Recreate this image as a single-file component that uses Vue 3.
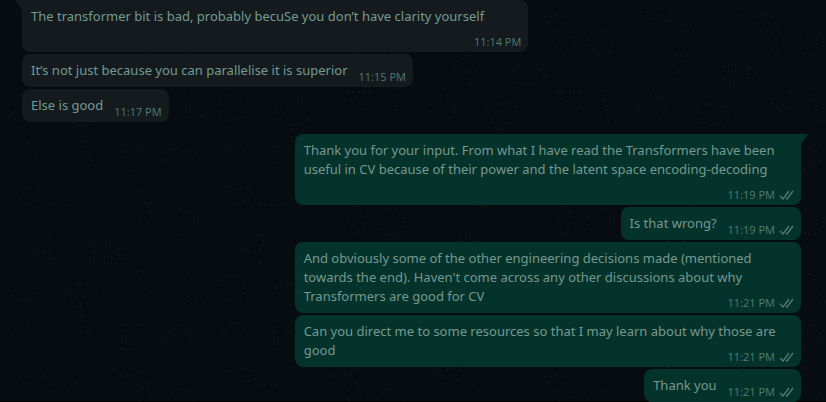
<script setup>
const messages = [
  { from: 'in', tail: true, time: '11:14 PM', text: 'The transformer bit is bad, probably becuSe you don’t have clarity yourself' },
  { from: 'in', time: '11:15 PM', text: 'It’s not just because you can parallelise it is superior' },
  { from: 'in', time: '11:17 PM', text: 'Else is good' },
  { from: 'out', tail: true, time: '11:19 PM', text: 'Thank you for your input. From what I have read the Transformers have been useful in CV because of their power and the latent space encoding-decoding' },
  { from: 'out', time: '11:19 PM', text: 'Is that wrong?' },
  { from: 'out', time: '11:21 PM', text: 'And obviously some of the other engineering decisions made (mentioned towards the end). Haven\'t come across any other discussions about why Transformers are good for CV' },
  { from: 'out', time: '11:21 PM', text: 'Can you direct me to some resources so that I may learn about why those are good' },
  { from: 'out', time: '11:21 PM', text: 'Thank you' },
]
</script>

<template>
  <main class="chat">
    <svg class="wallpaper" aria-hidden="true">
      <defs>
        <pattern id="doodles" width="210" height="180" patternUnits="userSpaceOnUse">
          <g fill="none" stroke="#1a2124" stroke-width="1" stroke-dasharray="1 3 1 6">
            <path d="M16 12l22-5 8 12-24 5zM50 24c8 2 18 3 28-2" />
            <path d="M112 8c12 18 28 4 38-2M146 22l9 24-12 10-6-24z" />
            <path d="M38 62c6-12 18-8 15 2s-15 12-22 2M50 68v18" />
            <circle cx="181" cy="42" r="13" />
            <path d="M94 65h24v18H94zM118 69c12 0 8 12 0 10" />
            <circle cx="22" cy="108" r="13" />
            <path d="M66 106l28-4 5 18-25 7zM82 125v18" />
            <path d="M138 92h25M141 99c2 13 17 17 22 3M184 95l5 30 15-10" />
            <path d="M12 154l14-14 12 16M64 147v25M76 154c10-9 22 4 12 14" />
            <path d="M122 145h22v25h-22zM158 155l25-10 10 15-20 10z" />
          </g>
        </pattern>
      </defs>
      <rect width="100%" height="100%" fill="url(#doodles)" />
    </svg>
    <article
      v-for="(message, index) in messages"
      :key="index"
      class="bubble"
      :class="[message.from, { tailed: message.tail }]"
    >
      <svg v-if="message.tail" class="tail" viewBox="0 0 8 12" aria-hidden="true">
        <path d="M0 0h7L0 10z" fill="currentColor" />
      </svg>
      <span class="text">{{ message.text }}</span>
      <span class="meta">
        <time>{{ message.time }}</time>
        <svg v-if="message.from === 'out'" class="ticks" viewBox="0 0 15 10" aria-label="Delivered">
          <path d="M1 6l3 3 6-8M7 8l1 1 6-8" fill="none" stroke="currentColor" stroke-width="1.3" />
        </svg>
      </span>
    </article>
  </main>
</template>

<style>
body {
  margin: 0;
  background: #070c10;
}
</style>

<style scoped>
.chat {
  position: relative;
  box-sizing: border-box;
  min-height: 100vh;
  display: flex;
  flex-direction: column;
  gap: 2px;
  padding: 0 25px 0 22px;
  overflow: hidden;
  box-shadow: inset 0 -1px #010204;
  font-family: "Noto Sans", "Open Sans", sans-serif;
}

.wallpaper {
  position: absolute;
  inset: 0;
  width: 100%;
  height: 100%;
}

.bubble {
  position: relative;
  box-sizing: border-box;
  display: flow-root;
  max-width: 65%;
  padding: 7px 9px;
  border-radius: 8px;
  font-size: 13px;
  line-height: 19px;
}

.in {
  align-self: flex-start;
  background: #141a1e;
  color: #739c91;
}

.out {
  align-self: flex-end;
  background: #03332b;
  color: #78988f;
}

.in + .out {
  margin-top: 10px;
}

.in.tailed {
  border-top-left-radius: 0;
}

.out.tailed {
  border-top-right-radius: 0;
}

.meta {
  float: right;
  display: flex;
  align-items: center;
  gap: 4px;
  margin: 6px -2px -6px 11px;
  font-family: "Open Sans", "Noto Sans", sans-serif;
  font-size: 11px;
}

.in .meta {
  color: #4b7d73;
}

.out .meta {
  color: #567b72;
}

.ticks {
  width: 15px;
  height: 10px;
}

.tail {
  position: absolute;
  top: 0;
  width: 8px;
  height: 12px;
}

.in .tail {
  right: 100%;
  color: #141a1e;
  transform: scaleX(-1);
}

.out .tail {
  left: 100%;
  color: #03332b;
}
</style>
